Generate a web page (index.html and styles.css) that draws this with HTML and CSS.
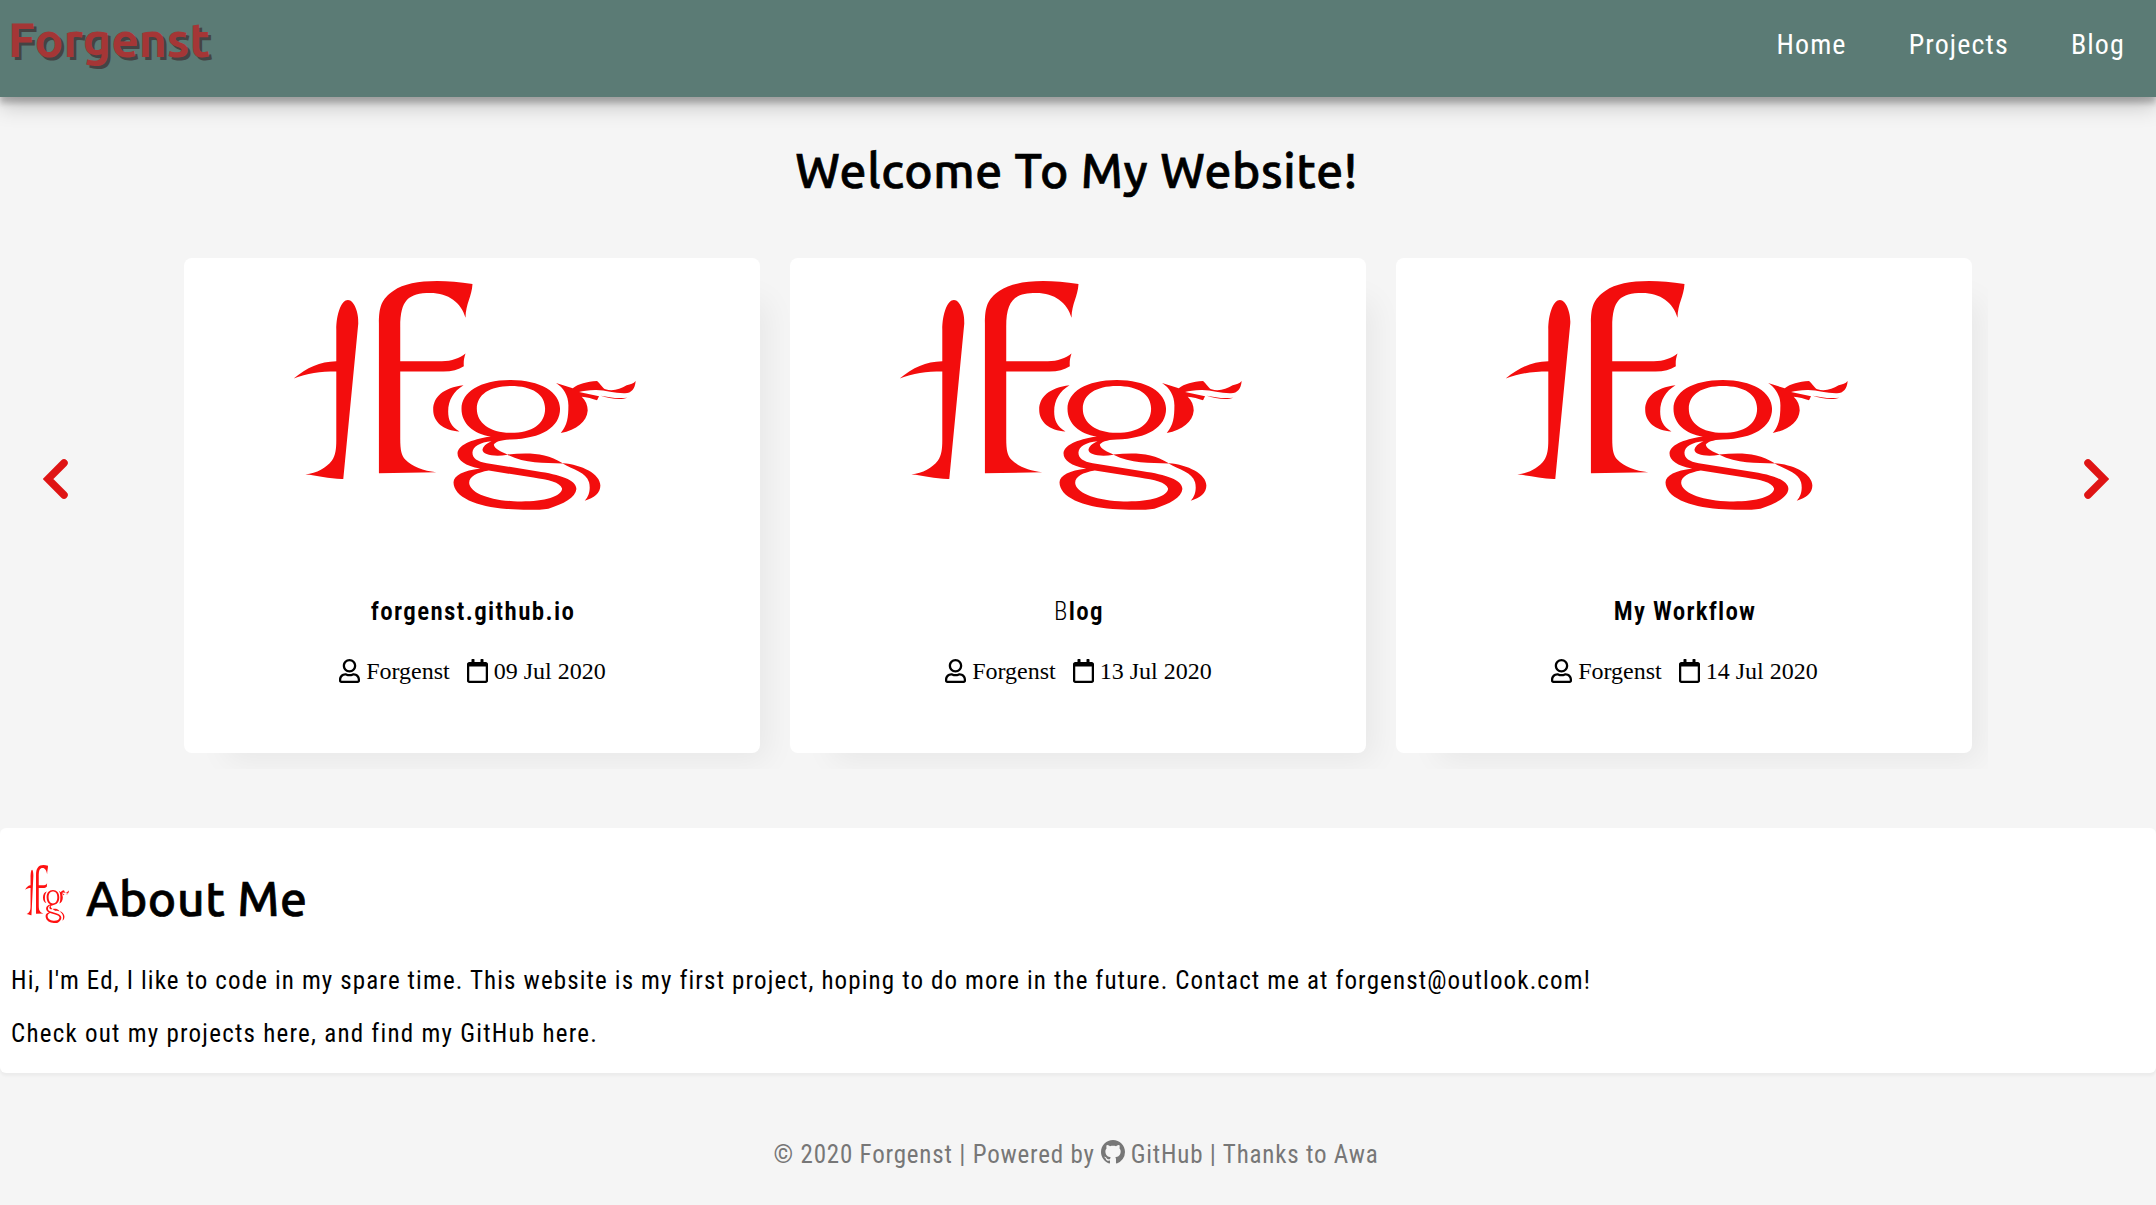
FILE: index.html
```html
<!DOCTYPE html>
<html lang="en">
<head>
<meta charset="utf-8">
<title>Forgenst</title>
<link rel="stylesheet" href="styles.css">
</head>
<body>
<svg class="defs" aria-hidden="true">
  <symbol id="mark" viewBox="38 33 1030 685" preserveAspectRatio="none">
    <path d="M168 273V180C168 130 184 90 203 90C222 90 236 130 234 160L189 625C150 626 110 614 75 612C110 608 138 592 155 570C166 553 168 535 168 510V304C120 304 80 309 40 325C80 292 118 274 168 273Z"/>
    <path d="M296 608V160C296 110 304 86 340 62C385 32 470 26 577 42C575 80 557 100 556 143C543 98 505 69 450 69C385 69 360 90 360 170V273H485C515 273 538 264 556 250C551 265 550 275 551 288C535 298 515 304 490 304H360V505C360 540 364 555 375 567C395 588 430 601 468 605Z"/>
    <path fill-rule="evenodd" d="M692 329C780 329 840 365 840 415C840 470 785 504 692 507C660 508 645 515 641 523C643 535 665 545 682 552C740 546 795 545 848 578C905 582 961 610 961 645C961 668 942 683 914 690C930 675 931 650 927 635C918 605 880 598 848 579C790 577 735 580 682 553C640 560 607 552 607 538C608 528 617 520 634 512C600 515 578 528 577 545C576 562 590 573 620 578L770 602C840 612 889 628 889 655C887 680 850 700 805 714C775 719 720 718 680 715C590 708 520 680 520 635C521 615 550 600 600 594C555 585 532 570 532 548C534 525 570 507 632 498C580 490 544 460 544 415C544 365 600 329 692 329ZM692 347C630 347 590 372 590 415C590 458 630 487 692 487C757 487 795 460 795 415C795 372 757 347 692 347ZM626 600C590 606 567 618 567 637C570 665 620 687 700 692C780 696 846 680 846 654C840 635 805 628 760 621Z"/>
    <path d="M550 345C490 352 459 380 459 418C459 455 490 480 538 483C512 468 504 448 504 423C504 390 520 363 550 345Z"/>
    <path d="M828 338L878 354C895 340 920 334 951 332C963 342 966 352 976 357C1000 364 1020 356 1040 345C1052 342 1060 340 1067 332C1065 355 1055 368 1035 369C1005 370 975 358 945 359C925 359 908 362 897 365L957 378L951 390C938 386 920 379 905 379C917 390 923 405 923 420C920 455 890 477 842 488C862 465 865 440 865 405C865 375 850 352 828 338Z"/>
    <path d="M962 376C985 380 1010 386 1042 382C1020 391 985 383 962 376Z"/>
  </symbol>
  <symbol id="user" viewBox="0 0 448 512">
    <path d="M313.600 304c-28.700 0-42.500 16-89.600 16-47.100 0-60.800-16-89.600-16C60.200 304 0 364.200 0 438.400V464c0 26.500 21.500 48 48 48h352c26.500 0 48-21.500 48-48v-25.600c0-74.200-60.200-134.400-134.400-134.400zM400 464H48v-25.600c0-47.600 38.800-86.400 86.400-86.400 14.600 0 38.300 16 89.600 16 51.700 0 74.900-16 89.600-16 47.600 0 86.400 38.800 86.400 86.400V464zM224 288c79.500 0 144-64.500 144-144S303.500 0 224 0 80 64.500 80 144s64.500 144 144 144zm0-240c52.900 0 96 43.100 96 96s-43.100 96-96 96-96-43.100-96-96 43.100-96 96-96z"/>
  </symbol>
  <symbol id="calendar" viewBox="0 0 448 512">
    <path d="M400 64h-48V12c0-6.600-5.400-12-12-12h-40c-6.600 0-12 5.400-12 12v52H160V12c0-6.600-5.400-12-12-12h-40c-6.600 0-12 5.400-12 12v52H48C21.500 64 0 85.500 0 112v352c0 26.500 21.500 48 48 48h352c26.500 0 48-21.500 48-48V112c0-26.500-21.500-48-48-48zm-6 400H54c-3.300 0-6-2.700-6-6V160h352v298c0 3.300-2.700 6-6 6z"/>
  </symbol>
</svg>

<header class="header">
  <div class="brand">Forgenst</div>
  <nav class="nav"><a>Home</a><a>Projects</a><a>Blog</a></nav>
</header>

<main>
  <h1 class="welcome">Welcome To My Website!</h1>
  <section class="slider">
    <svg class="arrow" viewBox="0 0 26 42"><path d="M21 5L5 21L21 37"/></svg>
    <div class="track">
      <article class="card">
        <svg class="picture"><use href="#mark"/></svg>
        <h2 class="title">forgenst.github.io</h2>
        <p class="meta"><svg class="icon"><use href="#user"/></svg><span class="author">Forgenst</span><svg class="icon"><use href="#calendar"/></svg><span>09 Jul 2020</span></p>
      </article>
      <article class="card">
        <svg class="picture"><use href="#mark"/></svg>
        <h2 class="title"><span class="light">B</span>log</h2>
        <p class="meta"><svg class="icon"><use href="#user"/></svg><span class="author">Forgenst</span><svg class="icon"><use href="#calendar"/></svg><span>13 Jul 2020</span></p>
      </article>
      <article class="card">
        <svg class="picture"><use href="#mark"/></svg>
        <h2 class="title workflow">My Workflow</h2>
        <p class="meta"><svg class="icon"><use href="#user"/></svg><span class="author">Forgenst</span><svg class="icon"><use href="#calendar"/></svg><span>14 Jul 2020</span></p>
      </article>
    </div>
    <svg class="arrow" viewBox="0 0 26 42"><path d="M5 5L21 21L5 37"/></svg>
  </section>

  <section class="about">
    <h1 class="about-title"><svg class="small-mark"><use href="#mark"/></svg>About Me</h1>
    <p class="intro">Hi, I'm Ed, I like to code in my spare time. This website is my first project, hoping to do more in the future. Contact me at forgenst@outlook.com!</p>
    <p class="links">Check out my projects here, and find my GitHub here.</p>
  </section>
</main>

<footer class="footer">
  <span>© 2020 Forgenst | Powered by</span>
  <svg class="github" viewBox="0 0 16 16"><path d="M8 0C3.580 0 0 3.580 0 8c0 3.540 2.290 6.530 5.470 7.590.4.070.55-.17.55-.38 0-.19-.01-.82-.01-1.490-2.010.37-2.530-.49-2.690-.94-.09-.23-.48-.94-.82-1.130-.28-.15-.68-.52-.01-.53.63-.01 1.080.58 1.230.82.72 1.210 1.870.87 2.330.66.07-.52.28-.87.51-1.070-1.780-.2-3.640-.89-3.640-3.950 0-.87.31-1.590.82-2.150-.08-.2-.36-1.020.08-2.120 0 0 .67-.21 2.200.82.64-.18 1.320-.27 2-.27s1.360.09 2 .27c1.530-1.040 2.200-.82 2.200-.82.44 1.100.16 1.920.08 2.120.51.56.82 1.270.82 2.150 0 3.070-1.870 3.750-3.650 3.950.29.25.54.73.54 1.480 0 1.070-.01 1.930-.01 2.200 0 .21.15.46.55.38A8.010 8.010 0 0 0 16 8c0-4.420-3.580-8-8-8z"/></svg>
  <span>GitHub | Thanks to Awa</span>
</footer>
</body>
</html>
```
FILE: styles.css
```css
* { box-sizing: border-box; }

body {
  margin: 0;
  min-height: 1205px;
  background: #f5f5f5;
  color: #000;
  font-family: "Roboto", "Open Sans", sans-serif;
  font-stretch: 75%;
  font-size: 25px;
  letter-spacing: 1.13px;
}

h1, h2, p { margin: 0; }

.defs { display: none; }

.header {
  display: flex;
  justify-content: space-between;
  height: 97px;
  padding: 0 31px 0 8px;
  background: #5b7b75;
  box-shadow: 0 10px 20px rgba(0, 0, 0, .19), 0 6px 6px rgba(0, 0, 0, .23);
}

.brand, .welcome, .about-title {
  font-family: "Ubuntu", "Open Sans", sans-serif;
  font-stretch: normal;
  font-size: 48px;
  font-weight: 500;
  letter-spacing: .6px;
}

.welcome, .about-title { -webkit-text-stroke: .7px #000; }

.brand {
  line-height: 56px;
  padding-top: 11px;
  color: #a53636;
  text-shadow: 3px 3px #444;
  font-weight: 700;
  letter-spacing: 0;
}

.nav {
  display: flex;
  gap: 62px;
  font-size: 28px;
  line-height: 90px;
  color: #fff;
}

.welcome {
  height: 71px;
  line-height: 56px;
  margin-top: 45px;
  padding-right: 3px;
  text-align: center;
}

.slider {
  display: flex;
  align-items: center;
  justify-content: space-between;
  height: 615px;
  padding: 0 47px 88px 43px;
}

.arrow {
  width: 26px;
  height: 42px;
  margin-top: 4px;
  fill: none;
  stroke: #df1414;
  stroke-width: 7.5;
  stroke-linecap: round;
  stroke-linejoin: miter;
}

.track {
  display: flex;
  gap: 30px;
  width: 1820px;
  height: 554px;
  margin-top: 30px;
  margin-left: 4px;
  padding: 43px 16px 16px;
  overflow: hidden;
}

.card {
  display: flex;
  flex-direction: column;
  align-items: center;
  width: 576px;
  height: 495px;
  padding-top: 23px;
  flex: none;
  border-radius: 8px;
  background: #fff;
  box-shadow: 25px 25px 30px -18px rgba(0, 0, 0, .06);
}

.picture {
  width: 343px;
  height: 229px;
  margin-right: 16px;
  fill: #f30d0d;
}

.title {
  height: 36px;
  margin-top: 84px;
  margin-left: 2px;
  line-height: 36px;
  font-size: 25px;
  font-weight: 600;
  letter-spacing: 1.35px;
}

.light { font-weight: 300; }

.workflow { letter-spacing: 1.2px; }

.meta {
  display: flex;
  align-items: center;
  height: 28px;
  margin-top: 28px;
  margin-left: 1px;
  font-family: "Liberation Serif", serif;
  font-size: 24px;
  letter-spacing: 0;
}

.icon {
  width: 21px;
  height: 24px;
  margin-top: -2px;
  margin-right: 6px;
}

.author { margin-right: 17px; }

.about {
  height: 245px;
  padding: 30px 11px 0;
  border-radius: 6px;
  background: #fff;
  box-shadow: 0 3px 3px rgba(0, 0, 0, .04);
}

.about-title {
  display: flex;
  height: 80px;
  line-height: 80px;
}

.small-mark {
  width: 44px;
  height: 58px;
  margin: 7px 17px 0 14px;
  fill: #f11;
}

.intro, .links {
  height: 53px;
  line-height: 53px;
}

.intro { margin-top: 16px; }

.links { letter-spacing: 1.24px; }

.footer {
  display: flex;
  justify-content: center;
  align-items: center;
  gap: 6px;
  height: 32px;
  margin-top: 65px;
  padding-right: 4px;
  color: #777;
  letter-spacing: .8px;
}

.github {
  width: 24px;
  height: 24px;
  margin-top: -5px;
  fill: #777;
}
```
